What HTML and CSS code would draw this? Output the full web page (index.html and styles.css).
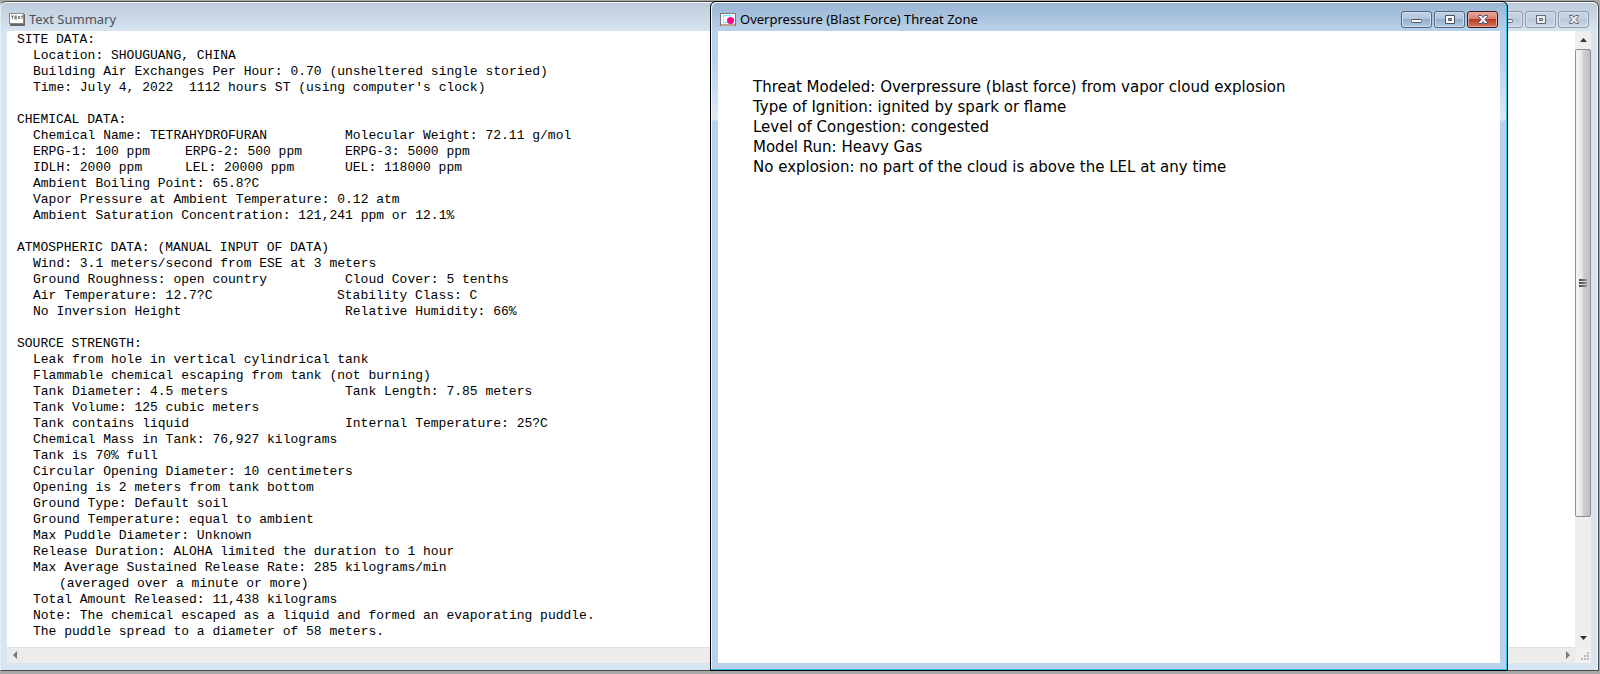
FILE: index.html
```html
<!DOCTYPE html>
<html lang="en">
<head>
    <meta charset="UTF-8">
    <meta name="viewport" content="width=device-width, initial-scale=1.0">
    <title>Text Summary</title>
    <link rel="stylesheet" href="styles.css">
</head>
<body>
    <main class="desktop">
        <section class="window summary">
            <header class="titlebar">
                <svg class="title-icon" width="16" height="13" viewBox="0 0 16 13">
                    <rect x="1" y="1" width="15" height="12" fill="#6b6663"/>
                    <rect x="0.500" y="0.500" width="14" height="10" fill="#fff" stroke="#8a8683"/>
                    <path d="M2 3h3M3.500 3v3M6 3h2M6 3v3h2M6 4.500h2M9 3l2 3M11 3l-2 3M12 3h2M13 3v3" stroke="#555" stroke-width="0.800" fill="none"/>
                </svg>
                <h1>Text Summary</h1>
                <div class="controls">
                    <button type="button" aria-label="Minimize"><svg width="12" height="12"><rect x="0.500" y="6.500" width="10" height="3" rx="1" fill="#eee" stroke="#5f6779"/></svg></button>
                    <button type="button" aria-label="Maximize"><svg width="12" height="12"><path d="M1.500 2.500h9v8h-9zM4.500 5.500v2h3v-2z" fill="#eee" fill-rule="evenodd" stroke="#5f6779"/></svg></button>
                    <button type="button" aria-label="Close"><svg width="12" height="12"><path d="M1.500 2.500h3l1.500 2 1.500-2h3v1L8 6.500l2.500 3v1h-3l-1.500-2-1.500 2h-3v-1l2.500-3-2.500-3z" fill="#eee" stroke="#5f6779"/></svg></button>
                </div>
            </header>
            <div class="client">
                <div class="report">
                    <h2>SITE DATA:</h2>
                    <p>Location: SHOUGUANG, CHINA</p>
                    <p>Building Air Exchanges Per Hour: 0.70 (unsheltered single storied)</p>
                    <p>Time: July 4, 2022&nbsp; 1112 hours ST (using computer's clock)</p>

                    <h2>CHEMICAL DATA:</h2>
                    <p class="pair"><span>Chemical Name: TETRAHYDROFURAN</span><span>Molecular Weight: 72.11 g/mol</span></p>
                    <p class="triple"><span>ERPG-1: 100 ppm</span><span>ERPG-2: 500 ppm</span><span>ERPG-3: 5000 ppm</span></p>
                    <p class="triple"><span>IDLH: 2000 ppm</span><span>LEL: 20000 ppm</span><span>UEL: 118000 ppm</span></p>
                    <p>Ambient Boiling Point: 65.8?C</p>
                    <p>Vapor Pressure at Ambient Temperature: 0.12 atm</p>
                    <p>Ambient Saturation Concentration: 121,241 ppm or 12.1%</p>

                    <h2>ATMOSPHERIC DATA: (MANUAL INPUT OF DATA)</h2>
                    <p>Wind: 3.1 meters/second from ESE at 3 meters</p>
                    <p class="pair"><span>Ground Roughness: open country</span><span>Cloud Cover: 5 tenths</span></p>
                    <p class="pair short"><span>Air Temperature: 12.7?C</span><span>Stability Class: C</span></p>
                    <p class="pair"><span>No Inversion Height</span><span>Relative Humidity: 66%</span></p>

                    <h2>SOURCE STRENGTH:</h2>
                    <p>Leak from hole in vertical cylindrical tank</p>
                    <p>Flammable chemical escaping from tank (not burning)</p>
                    <p class="pair"><span>Tank Diameter: 4.5 meters</span><span>Tank Length: 7.85 meters</span></p>
                    <p>Tank Volume: 125 cubic meters</p>
                    <p class="pair"><span>Tank contains liquid</span><span>Internal Temperature: 25?C</span></p>
                    <p>Chemical Mass in Tank: 76,927 kilograms</p>
                    <p>Tank is 70% full</p>
                    <p>Circular Opening Diameter: 10 centimeters</p>
                    <p>Opening is 2 meters from tank bottom</p>
                    <p>Ground Type: Default soil</p>
                    <p>Ground Temperature: equal to ambient</p>
                    <p>Max Puddle Diameter: Unknown</p>
                    <p>Release Duration: ALOHA limited the duration to 1 hour</p>
                    <p>Max Average Sustained Release Rate: 285 kilograms/min</p>
                    <p class="indent">(averaged over a minute or more)</p>
                    <p>Total Amount Released: 11,438 kilograms</p>
                    <p>Note: The chemical escaped as a liquid and formed an evaporating puddle.</p>
                    <p>The puddle spread to a diameter of 58 meters.</p>
                </div>
                <div class="vscroll">
                    <svg width="16" height="18"><path d="M5 11l3.500-4 3.500 4z" fill="#333"/></svg>
                    <div class="thumb"><i></i><i></i><i></i></div>
                    <svg class="down" width="16" height="18"><path d="M5 7l3.500 4 3.500-4z" fill="#333"/></svg>
                </div>
                <div class="hscroll">
                    <svg width="16" height="16"><path d="M10 3v8L6 7z" fill="#777"/></svg>
                    <svg width="16" height="16"><path d="M7 3v8l4-4z" fill="#777"/></svg>
                </div>
                <svg class="grip" width="16" height="16"><path d="M12 6h2M9 9h2M12 9h2M6 12h2M9 12h2M12 12h2" stroke="#b8b8b8" stroke-width="2"/></svg>
            </div>
        </section>

        <section class="window threat">
            <header class="titlebar">
                <svg class="title-icon" width="16" height="13" viewBox="0 0 16 13">
                    <rect x="0.500" y="0.500" width="15" height="12" fill="#fff" stroke="#777"/>
                    <path d="M1 12h14" stroke="#c9a08c" stroke-width="2"/>
                    <rect x="3.500" y="2.500" width="7" height="7" fill="none" stroke="#5ff"/>
                    <circle cx="10.500" cy="7.500" r="3.500" fill="#f08"/>
                </svg>
                <h1>Overpressure (Blast Force) Threat Zone</h1>
                <div class="controls">
                    <button type="button" aria-label="Minimize"><svg width="12" height="12"><rect x="0.500" y="6.500" width="10" height="3" rx="1" fill="#fff" stroke="#4b5268"/></svg></button>
                    <button type="button" aria-label="Maximize"><svg width="12" height="12"><path d="M1.500 2.500h9v8h-9zM4.500 5.500v2h3v-2z" fill="#fff" fill-rule="evenodd" stroke="#4b5268"/></svg></button>
                    <button type="button" class="close" aria-label="Close"><svg width="12" height="12"><path d="M1.500 2.500h3l1.500 2 1.500-2h3v1L8 6.500l2.500 3v1h-3l-1.500-2-1.500 2h-3v-1l2.500-3-2.500-3z" fill="#fff" stroke="#4b5268"/></svg></button>
                </div>
            </header>
            <div class="message">
                <p>Threat Modeled: Overpressure (blast force) from vapor cloud explosion</p>
                <p>Type of Ignition: ignited by spark or flame</p>
                <p>Level of Congestion: congested</p>
                <p>Model Run: Heavy Gas</p>
                <p>No explosion: no part of the cloud is above the LEL at any time</p>
            </div>
        </section>
    </main>
</body>
</html>
```
FILE: styles.css
```css
* {
    box-sizing: border-box;
}
body {
    margin: 0;
    background: #a8a8a8;
    color: #000;
}
h1, h2, p {
    margin: 0;
    font-weight: normal;
}
.desktop {
    position: relative;
    display: flex;
    min-height: 100vh;
    padding: 1px 1px 3px 0;
}
.window {
    display: flex;
    flex-direction: column;
    border: 1px solid #4a4a4a;
    border-radius: 6px 6px 0 0;
    padding: 0 7px 7px 6px;
}
.summary {
    flex: 1;
    border-left-color: #e4eef8;
    background: linear-gradient(#bccbda, #d7e4f1 29px);
    box-shadow: inset 0 1px #f4f8fc, inset -1px 0 #eef4fa;
}
.threat {
    position: absolute;
    top: 1px;
    bottom: 3px;
    left: 710px;
    right: 92px;
    padding-left: 7px;
    border-color: #000;
    background: linear-gradient(#98b4d2, #b9d1ea 29px, #b9d1ea 60px, #dce9f5 118px, #b9d1ea 119px);
    box-shadow: inset -1px -1px #2fc4e6, inset 1px 1px #f4f8fc;
}
.titlebar {
    display: flex;
    align-items: center;
    gap: 4px;
    height: 29px;
    padding: 5px 2px 0;
}
.titlebar h1 {
    flex: 1;
    font: 13px/18px "Noto Sans", sans-serif;
}
.summary h1 {
    color: #4c5157;
}
.controls {
    display: flex;
    gap: 2px;
}
.controls button {
    display: flex;
    align-items: center;
    justify-content: center;
    width: 31px;
    height: 17px;
    padding: 0;
    border: 1px solid #8e9bac;
    border-radius: 3px;
    background: linear-gradient(#c6d3e1, #c2d0df 50%, #b9c8d9 50%, #cddae8);
    box-shadow: inset 0 0 0 1px #d8e3ee;
}
.threat .controls button {
    border-color: #56677e;
    background: linear-gradient(#bfd1e6, #b0c5dd 50%, #94adc9 50%, #b4cbe4);
    box-shadow: inset 0 0 0 1px #cfdeee;
}
.threat .controls .close {
    border-color: #43141a;
    background: linear-gradient(#e6a99c, #d67b6b 50%, #b83a22 50%, #d47a60);
    box-shadow: inset 0 0 0 1px #e5aa9c;
}
.client {
    flex: 1;
    display: grid;
    grid-template-columns: 1fr 16px;
    grid-template-rows: 1fr 16px;
    background: #fff;
}
.report {
    padding: 1px 0 0 10px;
    font: 13px/16px "Liberation Mono", monospace;
    white-space: nowrap;
}
.report h2 {
    font-size: 13px;
    line-height: 16px;
}
.report p {
    padding-left: 16px;
}
.report p + h2 {
    margin-top: 16px;
}
.report .pair {
    display: grid;
    grid-template-columns: 312px 1fr;
}
.report .short {
    grid-template-columns: 304px 1fr;
}
.report .triple {
    display: grid;
    grid-template-columns: 152px 160px 1fr;
}
.report .indent {
    padding-left: 42px;
}
.vscroll {
    display: flex;
    flex-direction: column;
    background: #eee;
}
.vscroll .down {
    margin-top: auto;
}
.thumb {
    display: flex;
    flex-direction: column;
    align-items: center;
    justify-content: center;
    gap: 1px;
    height: 76%;
    border: 1px solid #8f8f8f;
    border-radius: 2px;
    background: linear-gradient(to right, #f5f5f5, #e6e6e8 45%, #cfcfd4 50%, #bdbdc4);
}
.thumb i {
    width: 8px;
    height: 2px;
    background: linear-gradient(to right, #444, #999);
}
.hscroll {
    display: flex;
    justify-content: space-between;
    background: #ececec;
    border-top: 1px solid #e0e0e0;
}
.grip {
    background: #f0f0f0;
}
.message {
    flex: 1;
    padding: 46px 35px;
    background: #fff;
    font: 15px/20px "DejaVu Sans", sans-serif;
}
```
